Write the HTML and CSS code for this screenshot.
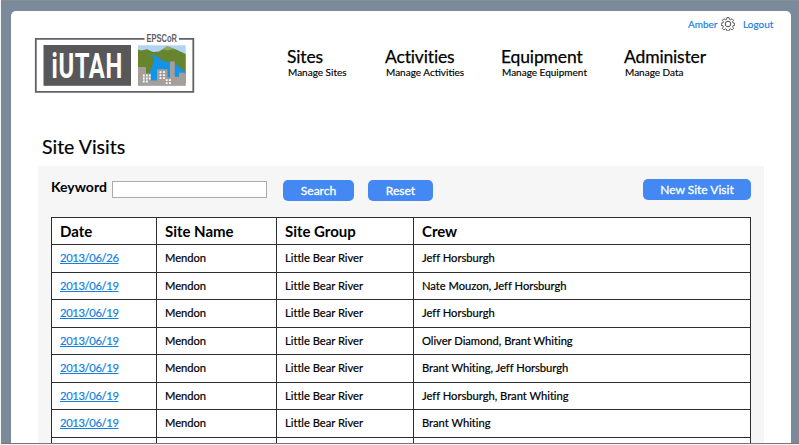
FILE: index.html
```html
<!DOCTYPE html>
<html lang="en">
<head>
<meta charset="utf-8">
<title>Site Visits</title>
<link rel="stylesheet" href="styles.css">
</head>
<body>
<div class="window">
<div class="card">
  <header class="header">
    <svg class="logo" viewBox="0 0 162 64" role="img" aria-label="iUTAH EPSCoR">
      <path d="M110.500 8.900H1.800V61.800H159.300V8.900H145" fill="none" stroke="#626266" stroke-width="1.800"/>
      <rect x="9.500" y="15" width="87.500" height="40.800" fill="#58585b"/>
      <g transform="translate(17.500 48) scale(.68 1)"><text class="logo-name" textLength="104" lengthAdjust="spacing">iUTAH</text></g>
      <text class="logo-tag" x="112.500" y="12.300" textLength="30.500" lengthAdjust="spacingAndGlyphs">EPSCoR</text>
      <rect x="104" y="15.300" width="47.700" height="40.400" fill="#b3d3f2"/>
      <path d="M104 19.500 107 20.500 113 19.300 119 22 125 21.500 133.300 16.200 142 19.500 151.700 24V45H104z" fill="#67852f"/>
      <path d="m127 20.300 6.300-4 7.500 3.400-4.500-.2-2.500 1-3-1z" fill="#91ac5f"/>
      <path d="M113 24q4 1.500 8 .6l-2 1.400q6 .3 7.500 3.300 2.500 2 7 2.500 9 1.500 12 5 3 3.500 6.200 5.200v11H115.500q-.5-12 3-18 2.500-4.500 1-7.500-2-2-6.500-3.500z" fill="#1593e6"/>
      <path d="M104 37h8v6.500h4.500V50.500h6.500V39.200h10.500v8.300h2.500V31.500h4.800v15.300h4.200v-4h6.700v12.900H104z" fill="#a69e99"/>
      <path class="windows" d="M109.800 44.600v8m3-8v8m3-8v5M126.500 41.200v8m3.500-8v8M132.700 49.300v5m3.200-5v5"/>
    </svg>
    <nav class="nav">
      <a class="nav-item sites"><b>Sites</b><span>Manage Sites</span></a>
      <a class="nav-item activities"><b>Activities</b><span>Manage Activities</span></a>
      <a class="nav-item equipment"><b>Equipment</b><span>Manage Equipment</span></a>
      <a class="nav-item administer"><b>Administer</b><span>Manage Data</span></a>
    </nav>
    <div class="account">
      <a class="user">Amber</a>
      <svg class="gear" viewBox="0 0 24 24" fill="none" stroke="#4b4b4b" stroke-width="1.700" stroke-linejoin="round">
        <path d="M10 1.500h4l.7 3.300 2 .9 2.900-1.900 2.700 2.700-1.900 2.900.8 2 3.300.7v3.800l-3.300.7-.8 2 1.900 2.900-2.700 2.700-2.900-1.900-2 .8-.7 3.400h-4l-.7-3.400-2-.8-2.900 1.900-2.700-2.700 1.900-2.900-.8-2-3.300-.7v-3.800l3.300-.7.8-2-1.900-2.900 2.700-2.700 2.900 1.900 2-.9z" transform="translate(.8 -.5) scale(.93)"/>
        <circle cx="12" cy="12" r="4.800"/>
      </svg>
      <a class="logout">Logout</a>
    </div>
  </header>
  <h1 class="title">Site Visits</h1>
  <main class="panel">
    <form class="toolbar">
      <label class="keyword" for="keyword">Keyword</label>
      <input class="field" id="keyword" type="text">
      <button class="button search" type="button">Search</button>
      <button class="button reset" type="button">Reset</button>
      <button class="button new" type="button">New Site Visit</button>
    </form>
    <div class="table" role="table">
      <div class="row head" role="row"><span>Date</span><span>Site Name</span><span>Site Group</span><span>Crew</span></div>
      <div class="row" role="row"><span><a>2013/06/26</a></span><span>Mendon</span><span>Little Bear River</span><span>Jeff Horsburgh</span></div>
      <div class="row" role="row"><span><a>2013/06/19</a></span><span>Mendon</span><span>Little Bear River</span><span>Nate Mouzon, Jeff Horsburgh</span></div>
      <div class="row" role="row"><span><a>2013/06/19</a></span><span>Mendon</span><span>Little Bear River</span><span>Jeff Horsburgh</span></div>
      <div class="row" role="row"><span><a>2013/06/19</a></span><span>Mendon</span><span>Little Bear River</span><span>Oliver Diamond, Brant Whiting</span></div>
      <div class="row" role="row"><span><a>2013/06/19</a></span><span>Mendon</span><span>Little Bear River</span><span>Brant Whiting, Jeff Horsburgh</span></div>
      <div class="row" role="row"><span><a>2013/06/19</a></span><span>Mendon</span><span>Little Bear River</span><span>Jeff Horsburgh, Brant Whiting</span></div>
      <div class="row" role="row"><span><a>2013/06/19</a></span><span>Mendon</span><span>Little Bear River</span><span>Brant Whiting</span></div>
      <div class="row" role="row"><span></span><span></span><span></span><span></span></div>
    </div>
  </main>
</div>
</div>
</body>
</html>
```
FILE: styles.css
```css
* { box-sizing: border-box; }
body {
  margin: 0;
  height: 445px;
  overflow: hidden;
  background: #f4f4f4;
  font-family: Lato, "Liberation Sans", sans-serif;
  color: #000;
}
.window {
  height: 444px;
  margin: 0 0 0 1px;
  padding: 10px 7px 0 10px;
  overflow: hidden;
  border-top: 1px solid #8b8e91;
  border-bottom: 1px solid #777;
  border-right: 1px solid #85888c;
  background: #7b8a9b;
}
.card {
  height: 440px;
  background: #fff;
  border-radius: 5px 5px 0 0;
}
.header { display: flex; height: 122px; }
.logo { flex: none; width: 162px; height: 64px; margin: 19px 0 0 23px; }
.logo-name { font: 700 35px Roboto, sans-serif; fill: #fff; }
.logo-tag { font: 700 11.500px "Liberation Sans", sans-serif; fill: #626266; }
.windows { fill: none; stroke: #fff; stroke-width: 1.800; stroke-dasharray: 1.800 1.200; }
.nav { display: flex; padding: 35px 0 0 91px; }
.nav-item { display: flex; flex-direction: column; white-space: nowrap; }
.nav-item b { font-size: 17.500px; font-weight: 400; line-height: 22px; letter-spacing: -.15px; -webkit-text-stroke: .25px #000; }
.nav-item span { padding-left: 1px; font-size: 10px; line-height: 8px; -webkit-text-stroke: .15px #000; }
.sites { width: 98px; }
.activities { width: 116px; }
.equipment { width: 123px; }
.administer { width: 66px; }
.account {
  display: flex;
  align-items: flex-start;
  padding-top: 6px;
  font-size: 10px;
  line-height: 14px;
  color: #1380df;
  white-space: nowrap;
  -webkit-text-stroke: .15px currentColor;
}
.user { width: 33px; margin-left: -2px; }
.gear { flex: none; width: 14px; height: 14px; margin-right: 8px; }
.title {
  margin: 0;
  padding: 2px 0 0 31px;
  height: 33px;
  font-size: 19.500px;
  font-weight: 400;
  line-height: 24px;
  -webkit-text-stroke: .2px #000;
}
.panel {
  width: 726px;
  height: 290px;
  margin-left: 27px;
  padding: 0 13px;
  background: #f6f6f6;
}
.toolbar { display: flex; align-items: flex-start; height: 51px; padding-top: 14px; }
.keyword { width: 61px; font-size: 14px; font-weight: 700; line-height: 14px; }
.field { width: 155px; height: 17px; margin-top: 1px; padding: 0 3px; border: 1px solid #aaa; border-radius: 0; background: #fff; }
.button {
  height: 21px;
  padding: 0;
  border: 0;
  border-radius: 5px;
  background: #4489f3;
  color: #fff;
  font: 400 12px Lato, sans-serif;
  -webkit-text-stroke: .3px #fff;
}
.search { width: 71px; margin-left: 16px; }
.reset { width: 65px; margin-left: 14px; }
.new { width: 108px; margin-left: auto; margin-top: -1px; }
.table { border-top: 1px solid #2d2d2d; width: 700px; }
.row {
  display: grid;
  grid-template-columns: 105px 120px 137px 337px;
  height: 27.450px;
  border-bottom: 1px solid #2d2d2d;
  border-right: 1px solid #2d2d2d;
  background: #fff;
  font-size: 11.200px;
  line-height: 26px;
  white-space: nowrap;
  -webkit-text-stroke: .2px currentColor;
}
.row span { padding-left: 8px; border-left: 1px solid #2d2d2d; letter-spacing: -.02px; }
.row a { color: #1380df; text-decoration: underline; letter-spacing: -.35px; }
.head { font-size: 15px; font-weight: 700; -webkit-text-stroke: 0; }
```
